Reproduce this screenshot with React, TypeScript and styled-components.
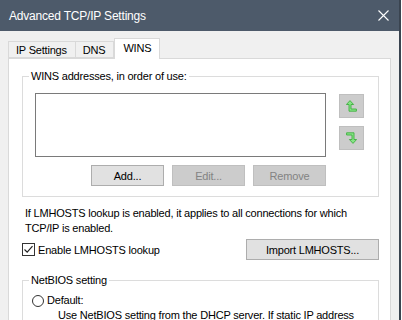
import React from 'react';
import styled, { createGlobalStyle } from 'styled-components';

const GlobalStyle = createGlobalStyle`
  html, body {
    margin: 0;
    padding: 0;
    background: #ffffff;
  }
  body {
    font-family: 'Liberation Sans', Arial, sans-serif;
    font-size: 11px;
    letter-spacing: -0.2px;
    color: #000000;
  }
`;

const Window = styled.div`
  width: 399px;
  height: 320px;
  background: #f0f0f0;
  border-right: 2px solid #3a4450;
  overflow: hidden;
  display: flex;
  flex-direction: column;
`;

const TitleBar = styled.div`
  height: 31px;
  flex: none;
  background: #4d5a6a;
  color: #ffffff;
  display: flex;
  align-items: center;
  justify-content: space-between;
  padding: 0 10px 0 9px;
  font-size: 12px;
`;

const CloseIcon = styled.svg`
  width: 11px;
  height: 11px;
  margin-top: -1px;
`;

const Body = styled.div`
  padding: 7px 8px 0 8px;
  display: flex;
  flex-direction: column;
`;

const TabStrip = styled.div`
  display: flex;
  align-items: flex-end;
  height: 20px;
  position: relative;
  z-index: 1;
`;

const Tab = styled.div<{ $active?: boolean }>`
  height: ${({ $active }) => ($active ? '21px' : '17px')};
  box-sizing: border-box;
  border: 1px solid #d9d9d9;
  border-bottom: ${({ $active }) => ($active ? 'none' : '1px solid #d9d9d9')};
  border-left: ${({ $active }) => ($active ? '1px solid #d9d9d9' : 'none')};
  background: ${({ $active }) => ($active ? '#ffffff' : '#f0f0f0')};
  padding: ${({ $active }) => ($active ? '2px 8px 0 8px' : '1px 8px 0 7px')};
  margin-bottom: ${({ $active }) => ($active ? '-1px' : '0')};
  display: flex;
  align-items: flex-start;
  line-height: 14px;
  &:first-child {
    border-left: 1px solid #d9d9d9;
  }
`;

const TabPage = styled.div`
  background: #ffffff;
  border: 1px solid #d9d9d9;
  height: 300px;
  padding: 17px 11px 0 13px;
  display: flex;
  flex-direction: column;
`;

const GroupBox = styled.div`
  position: relative;
  border: 1px solid #dcdcdc;
`;

const GroupLabel = styled.span`
  position: absolute;
  top: -8px;
  left: 6px;
  padding: 0 2px;
  background: #ffffff;
  line-height: 15px;
`;

const AddressGrid = styled.div`
  display: grid;
  grid-template-columns: 291px 25px;
  column-gap: 13px;
  row-gap: 8px;
  padding: 16px 0 10px 12px;
`;

const ListBox = styled.div`
  height: 64px;
  box-sizing: border-box;
  border: 1px solid #7a7a7a;
  background: #ffffff;
`;

const ArrowColumn = styled.div`
  display: flex;
  flex-direction: column;
  gap: 8px;
  padding-top: 1px;
`;

const ArrowButton = styled.div`
  width: 25px;
  height: 24px;
  box-sizing: border-box;
  border: 1px solid #bfbfbf;
  background: #cccccc;
  display: flex;
  align-items: center;
  justify-content: center;
`;

const ButtonRow = styled.div`
  display: flex;
  justify-content: flex-end;
  gap: 8px;
`;

const Button = styled.div<{ $disabled?: boolean; $width?: number }>`
  width: ${({ $width }) => $width ?? 73}px;
  height: 21px;
  box-sizing: border-box;
  border: 1px solid ${({ $disabled }) => ($disabled ? '#bfbfbf' : '#adadad')};
  background: ${({ $disabled }) => ($disabled ? '#cccccc' : '#e1e1e1')};
  color: ${({ $disabled }) => ($disabled ? '#838383' : '#000000')};
  display: flex;
  align-items: center;
  justify-content: center;
`;

const Note = styled.p`
  margin: 9px 0 0 3px;
  line-height: 15px;
`;

const OptionRow = styled.div`
  display: flex;
  align-items: center;
  justify-content: space-between;
  margin-top: 3px;
`;

const CheckLabel = styled.label`
  display: flex;
  align-items: center;
  gap: 3px;
`;

const CheckBox = styled.span`
  width: 13px;
  height: 13px;
  box-sizing: border-box;
  border: 1px solid #333333;
  background: #ffffff;
  display: flex;
  align-items: center;
  justify-content: center;
`;

const NetBiosBox = styled(GroupBox)`
  margin-top: 20px;
  height: 60px;
  border-bottom: none;
  padding: 12px 0 0 9px;
`;

const RadioRow = styled.div`
  display: flex;
  align-items: center;
  gap: 3px;
  line-height: 15px;
`;

const Radio = styled.span`
  width: 12px;
  height: 12px;
  box-sizing: border-box;
  border: 1px solid #333333;
  border-radius: 50%;
  background: #ffffff;
`;

const Description = styled.div`
  padding-left: 26px;
  line-height: 15px;
`;

const HookArrow: React.FC<{ down?: boolean }> = ({ down }) => (
  <svg
    width="11"
    height="12"
    viewBox="0 0 11 12"
    style={down ? { transform: 'rotate(180deg)' } : undefined}
  >
    <polygon
      points="4,0.6 7.6,4.5 5,4.5 5,9 10.4,9 10.4,11.2 3,11.2 3,4.5 0.4,4.5"
      fill="#86e486"
      stroke="#3fb03f"
      strokeWidth="0.9"
      strokeLinejoin="miter"
    />
  </svg>
);

export default function App() {
  return (
    <>
      <GlobalStyle />
      <Window>
        <TitleBar>
          <span>Advanced TCP/IP Settings</span>
          <CloseIcon viewBox="0 0 11 11">
            <path d="M0.5 0.5 L10.5 10.5 M10.5 0.5 L0.5 10.5" stroke="#ffffff" strokeWidth="1.1" />
          </CloseIcon>
        </TitleBar>
        <Body>
          <TabStrip>
            <Tab>IP Settings</Tab>
            <Tab>DNS</Tab>
            <Tab $active>WINS</Tab>
          </TabStrip>
          <TabPage>
            <GroupBox>
              <GroupLabel>WINS addresses, in order of use:</GroupLabel>
              <AddressGrid>
                <ListBox />
                <ArrowColumn>
                  <ArrowButton>
                    <HookArrow />
                  </ArrowButton>
                  <ArrowButton>
                    <HookArrow down />
                  </ArrowButton>
                </ArrowColumn>
                <ButtonRow>
                  <Button>Add...</Button>
                  <Button $disabled>Edit...</Button>
                  <Button $disabled>Remove</Button>
                </ButtonRow>
              </AddressGrid>
            </GroupBox>
            <Note>
              If LMHOSTS lookup is enabled, it applies to all connections for which
              <br />
              TCP/IP is enabled.
            </Note>
            <OptionRow>
              <CheckLabel>
                <CheckBox>
                  <svg width="11" height="11" viewBox="0 0 11 11">
                    <path d="M1.5 5.5 L4.2 8.2 L9.5 2.2" fill="none" stroke="#222222" strokeWidth="1.2" />
                  </svg>
                </CheckBox>
                Enable LMHOSTS lookup
              </CheckLabel>
              <Button $width={133}>Import LMHOSTS...</Button>
            </OptionRow>
            <NetBiosBox>
              <GroupLabel>NetBIOS setting</GroupLabel>
              <RadioRow>
                <Radio />
                Default:
              </RadioRow>
              <Description>
                Use NetBIOS setting from the DHCP server. If static IP address
              </Description>
            </NetBiosBox>
          </TabPage>
        </Body>
      </Window>
    </>
  );
}
